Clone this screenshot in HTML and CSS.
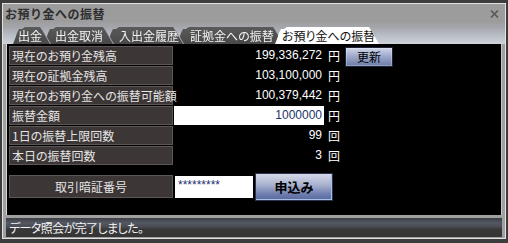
FILE: index.html
```html
<!DOCTYPE html>
<html lang="ja">
<head>
<meta charset="utf-8">
<title>お預り金への振替</title>
<link rel="stylesheet" href="styles.css">
</head>
<body>
<div class="frame">
  <div class="win">
    <div class="title">
      <span class="title-text">お預り金への振替</span>
      <svg class="close" width="9" height="8" viewBox="0 0 9 8"><path d="M1 0.5 L8 7.5 M8 0.5 L1 7.5" stroke="#585858" stroke-width="1.6" fill="none"/></svg>
    </div>
    <div class="tabs">
      <div class="tab t1"><div class="tab-in">出金</div></div>
      <div class="tab t2"><div class="tab-in">出金取消</div></div>
      <div class="tab t3"><div class="tab-in">入出金履歴</div></div>
      <div class="tab t4"><div class="tab-in">証拠金への振替</div></div>
      <div class="tab t5"><div class="tab-in">お預り金への振替</div></div>
    </div>
    <div class="content">
      <div class="row">
        <div class="label">現在のお預り金残高</div>
        <div class="value">199,336,272</div>
        <div class="unit">円</div>
        <button class="btn-refresh">更新</button>
      </div>
      <div class="row">
        <div class="label">現在の証拠金残高</div>
        <div class="value">103,100,000</div>
        <div class="unit">円</div>
      </div>
      <div class="row">
        <div class="label">現在のお預り金への振替可能額</div>
        <div class="value">100,379,442</div>
        <div class="unit">円</div>
      </div>
      <div class="row">
        <div class="label">振替金額</div>
        <div class="value input">1000000</div>
        <div class="unit">円</div>
      </div>
      <div class="row">
        <div class="label">1日の振替上限回数</div>
        <div class="value">99</div>
        <div class="unit">回</div>
      </div>
      <div class="row">
        <div class="label">本日の振替回数</div>
        <div class="value">3</div>
        <div class="unit">回</div>
      </div>
      <div class="row row-pin">
        <div class="label label-center">取引暗証番号</div>
        <div class="pin">*********</div>
        <button class="btn-apply">申込み</button>
      </div>
    </div>
    <div class="status">データ照会が完了しました。</div>
  </div>
</div>
</body>
</html>
```
FILE: styles.css
```css
html, body {
  margin: 0;
  padding: 0;
  background: #3c3c3c;
}

.frame {
  width: 508px;
  height: 243px;
  box-sizing: border-box;
  padding: 3px 2px 4px 2px;
  background: #3c3c3c;
  font-family: "Noto Sans CJK JP", sans-serif;
}

.win {
  height: 100%;
  box-sizing: border-box;
  border: 1px solid #e2e2e2;
  background: #a0a0a0;
  display: flex;
  flex-direction: column;
}

.title {
  height: 18px;
  flex: none;
  display: flex;
  align-items: center;
  justify-content: space-between;
  padding: 0 6px 0 2px;
  background: #9c9c9c;
}

.title-text {
  font-size: 12px;
  font-weight: 700;
  color: #2e2e2e;
  line-height: 18px;
  padding-top: 1px;
  letter-spacing: 0.5px;
}

.close {
  display: block;
  margin-top: 2px;
}

.tabs {
  height: 22px;
  flex: none;
  box-sizing: border-box;
  padding: 5px 0 0 10px;
  display: flex;
  align-items: flex-end;
  background: linear-gradient(#9e9e9e 0%, #a4a6ac 25%, #b6bac2 55%, #c6cad2 85%, #cfd2d8 100%);
}

.tab {
  height: 17px;
  flex: none;
  position: relative;
  filter: drop-shadow(1px 0 0 #a4a6ac);
}

.tab-in {
  height: 100%;
  box-sizing: border-box;
  clip-path: polygon(0 100%, 2px 70%, 4px 35%, 6px 12%, 9px 2px, 12px 0, calc(100% - 10px) 0, calc(100% - 8px) 3px, 100% 100%);
  background: linear-gradient(#5a5a5a, #484848);
  color: #f2f2f2;
  font-size: 12px;
  line-height: 17px;
  white-space: nowrap;
  font-feature-settings: "palt";
}

.t1 { width: 37px; z-index: 5; }
.t1 .tab-in { padding-left: 5px; }
.t2 { width: 69px; margin-left: -6px; z-index: 4; }
.t2 .tab-in { padding-left: 11px; }
.t3 { width: 76px; margin-left: -6px; z-index: 3; }
.t3 .tab-in { padding-left: 12px; }
.t4 { width: 106px; margin-left: -6px; z-index: 2; }
.t4 .tab-in { padding-left: 13px; }
.t5 { width: 104px; margin-left: -8px; z-index: 6; filter: none; }
.t5 .tab-in {
  padding-left: 7px;
  background: #ffffff;
  color: #111111;
}

.content {
  height: 171px;
  flex: none;
  box-sizing: border-box;
  margin: 0 3px;
  border-left: 1px solid #d4d4d4;
  border-right: 1px solid #c6c6c6;
  background: #000;
  padding: 2px 0 0 2px;
}

.row {
  display: flex;
  height: 19px;
  margin-bottom: 1px;
}

.label {
  width: 164px;
  flex: none;
  box-sizing: border-box;
  border: 1px solid #5c5656;
  background: #3d3636;
  color: #e4e4e4;
  font-size: 12px;
  line-height: 17px;
  padding-left: 2px;
  white-space: nowrap;
  font-feature-settings: "palt";
}

.value {
  width: 150px;
  flex: none;
  margin-left: 1px;
  box-sizing: border-box;
  text-align: right;
  padding-right: 2px;
  font-family: "Liberation Sans", sans-serif;
  font-size: 12px;
  line-height: 19px;
  color: #ffffff;
}

.value.input {
  background: #ffffff;
  color: #1a3468;
}

.unit {
  width: 21px;
  flex: none;
  box-sizing: border-box;
  padding-left: 4px;
  font-size: 12px;
  line-height: 19px;
  color: #ffffff;
}

.btn-refresh {
  width: 48px;
  height: 20px;
  margin-top: 1px;
  padding: 0;
  box-sizing: border-box;
  border: 1px solid #1e2438;
  background: linear-gradient(#d0d6ea, #9aa6c8 50%, #6c7aa6);
  box-shadow: inset 0 0 0 1px rgba(255, 255, 255, 0.25);
  font-family: "Noto Sans CJK JP", sans-serif;
  font-size: 12px;
  line-height: 18px;
  color: #000;
}

.row-pin {
  height: 23px;
  margin-top: 10px;
}

.label-center {
  text-align: center;
  line-height: 21px;
  padding-left: 0;
}

.pin {
  width: 78px;
  height: 22px;
  flex: none;
  margin: 1px 0 0 2px;
  box-sizing: border-box;
  background: #ffffff;
  color: #1c3070;
  font-family: "Liberation Sans", sans-serif;
  font-size: 12px;
  line-height: 14px;
  padding: 2px 0 0 3px;
}

.btn-apply {
  width: 78px;
  height: 28px;
  flex: none;
  margin: -2px 0 0 2px;
  padding: 0;
  box-sizing: border-box;
  border: 1px solid #2a3250;
  background: linear-gradient(#d6dae8, #a4aecc 45%, #6a7aac 80%, #5a6aa0);
  box-shadow: inset -1px -1px 0 #a8c0e8;
  font-family: "Noto Sans CJK JP", sans-serif;
  font-size: 13px;
  font-weight: 700;
  line-height: 26px;
  color: #000;
}

.status {
  height: 19px;
  flex: none;
  margin: 3px 3px 0 3px;
  box-sizing: border-box;
  padding-left: 3px;
  background: linear-gradient(#3c3e44 0%, #545862 25%, #4a4d55 45%, #383838 60%, #353535 100%);
  color: #f4f4f4;
  font-size: 12px;
  line-height: 19px;
  white-space: nowrap;
  letter-spacing: -0.6px;
  font-feature-settings: "palt";
}
```
